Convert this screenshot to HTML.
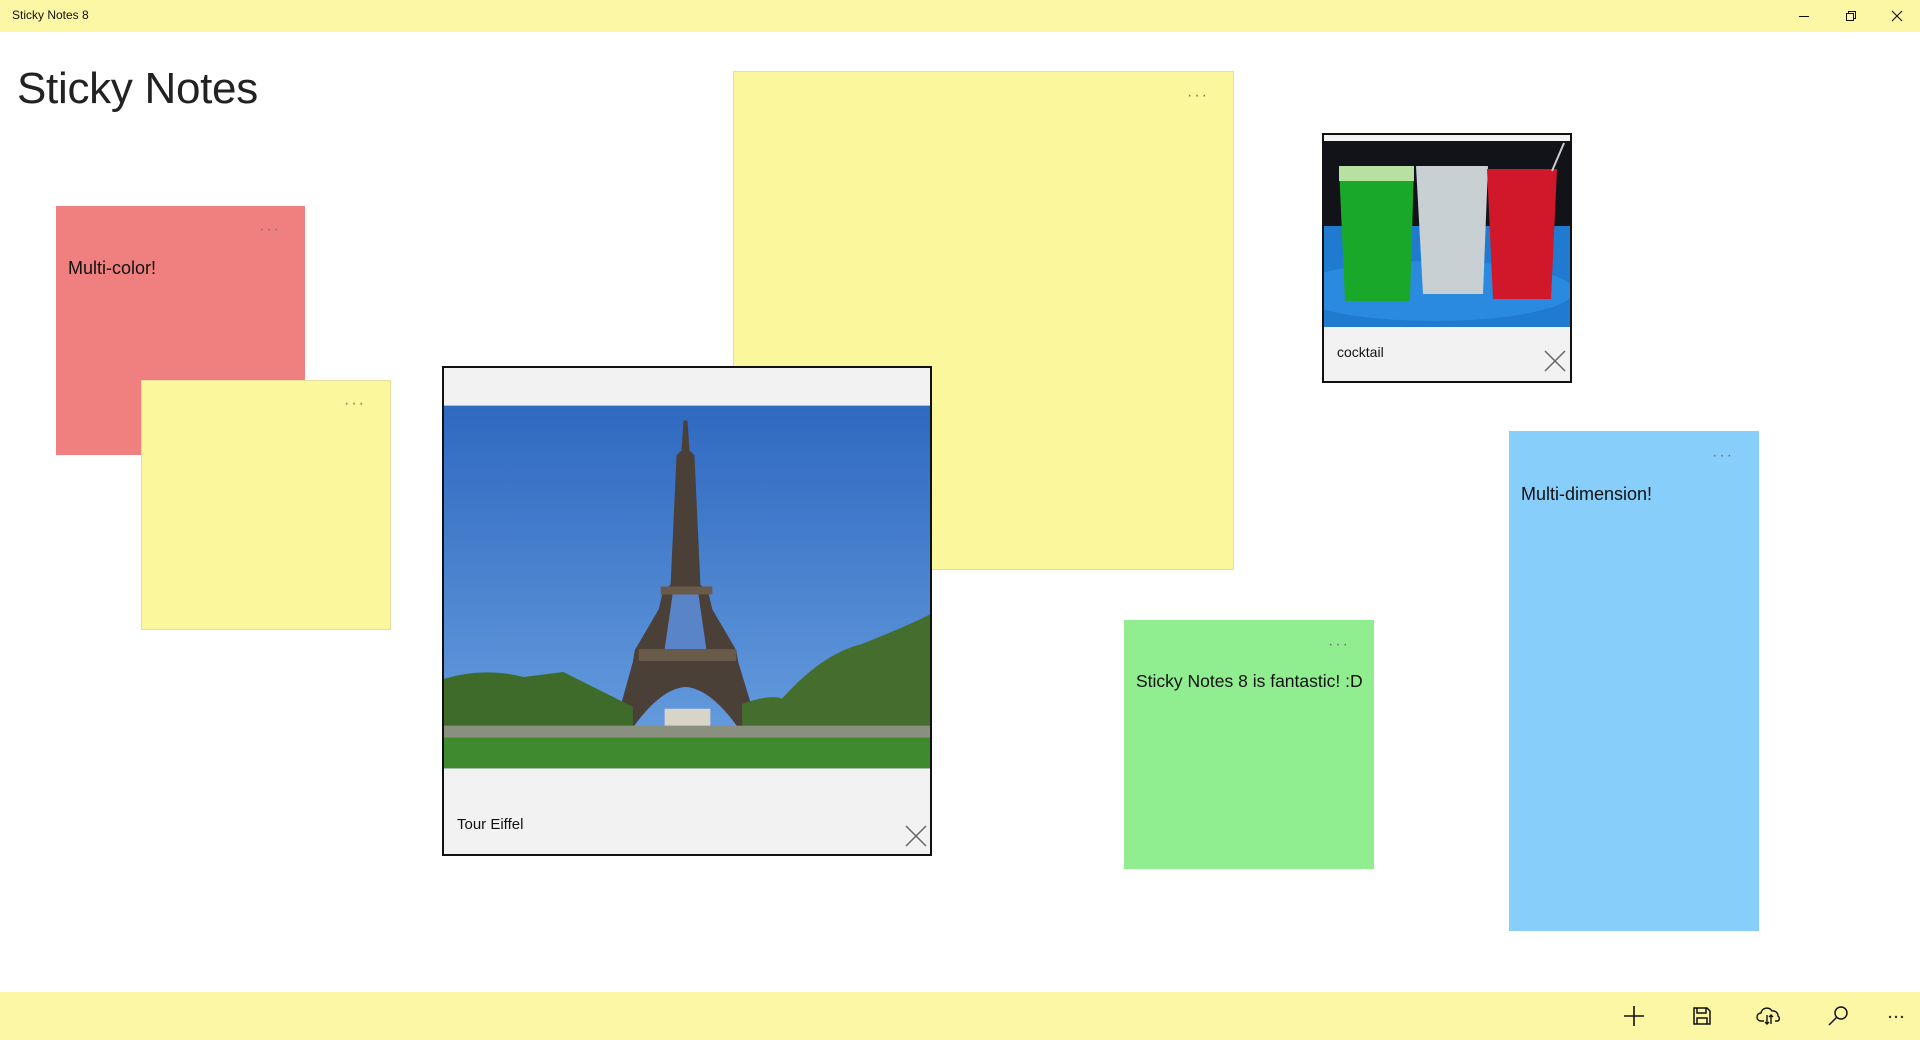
<!DOCTYPE html>
<html><head><meta charset="utf-8"><style>
*{margin:0;padding:0;box-sizing:border-box}
body{width:1920px;height:1040px;overflow:hidden;background:#fff;font-family:"Liberation Sans",sans-serif;position:relative;color:#111}
.abs{position:absolute}
.tb{left:0;top:0;width:1920px;height:32px;background:#fcf7a4}
.bb{left:0;top:992px;width:1920px;height:48px;background:#fcf7a4}
.note{position:absolute}
.dots{position:absolute;font-size:16px;color:#777;letter-spacing:2px;line-height:10px}
.nt{position:absolute;font-size:18px;color:#111}
.card{position:absolute;background:#f2f2f2;border:2px solid #111}
</style></head><body>
<div class="abs tb"></div>
<div class="abs" style="left:12px;top:8px;font-size:12px">Sticky Notes 8</div>
<svg class="abs" style="left:1795px;top:8px" width="120" height="16">
<line x1="4" y1="8.5" x2="14" y2="8.5" stroke="#111" stroke-width="1"/>
<rect x="51.5" y="5.5" width="7" height="7" fill="none" stroke="#111"/>
<path d="M53.5 5.5V3.5H60.5V10.5H58.5" fill="none" stroke="#111"/>
<path d="M97 3L107 13M107 3L97 13" stroke="#111" stroke-width="1.1"/>
</svg>
<div class="abs" style="left:17px;top:64px;font-size:44px;color:#222;letter-spacing:-0.3px">Sticky Notes</div>

<div class="note" style="left:56px;top:206px;width:249px;height:249px;background:#f08080"></div>
<div class="dots" style="left:259px;top:225px">···</div>
<div class="nt" style="left:68px;top:258px">Multi-color!</div>

<div class="note" style="left:141px;top:380px;width:250px;height:250px;background:#fbf79d;border:1px solid #e4dfa0"></div>
<div class="dots" style="left:344px;top:399px">···</div>

<div class="note" style="left:733px;top:71px;width:501px;height:499px;background:#fbf79d;border:1px solid #e4dfa0"></div>
<div class="dots" style="left:1187px;top:91px">···</div>

<div class="card" style="left:442px;top:366px;width:490px;height:490px">
<svg class="abs" style="left:0;top:36px" width="486" height="366" viewBox="0 0 489 365">
<defs><linearGradient id="sky" x1="0" y1="0" x2="0" y2="1"><stop offset="0" stop-color="#2f69c0"/><stop offset="1" stop-color="#6aa0e0"/></linearGradient></defs>
<rect width="489" height="365" fill="url(#sky)"/>
<path d="M241 15L245 15L247 45L252 50L258 180L266 188L270 205L294 246L296 258L318 330L300 330Q270 285 243 283Q216 285 186 330L170 330L190 258L192 246L216 205L220 188L228 180L234 50L239 45Z" fill="#4a4038"/>
<path d="M230 190h26l8 55h-42z" fill="#5a84c8"/>
<rect x="218" y="182" width="52" height="8" fill="#6a5a4a"/>
<rect x="196" y="245" width="98" height="12" fill="#6a5a4a"/>
<path d="M0 275q40-12 80-2l40 -5 40 20 30 15v60H0z" fill="#3e6a2a"/>
<path d="M300 300q30-10 40 -5q40-45 80-55q50-20 69-30v150H300z" fill="#456e2e"/>
<rect x="222" y="305" width="46" height="22" fill="#d8d4c8"/>
<rect x="0" y="322" width="489" height="14" fill="#8a9080"/>
<rect x="0" y="334" width="489" height="31" fill="#3f8a2e"/>
</svg>
<div class="abs" style="left:13px;top:448px;font-size:15px">Tour Eiffel</div>
<svg class="abs" style="left:461px;top:457px" width="22" height="22"><path d="M1 1L21 21M21 1L1 21" stroke="#666" stroke-width="1.5"/></svg>
</div>

<div class="card" style="left:1322px;top:133px;width:250px;height:250px">
<svg class="abs" style="left:0;top:6px" width="246" height="186" viewBox="0 0 246 186">
<rect width="246" height="186" fill="#111318"/>
<rect x="0" y="85" width="246" height="101" fill="#1f7ad0"/>
<ellipse cx="110" cy="150" rx="140" ry="30" fill="#2a8ae0"/>
<path d="M15 25h75l-4 135h-65z" fill="#1aa82a"/>
<path d="M15 25h75v15h-75z" fill="#b8e0a0"/>
<path d="M92 25h72l-5 128h-60z" fill="#c8d0d4"/>
<path d="M163 28h70l-6 130h-58z" fill="#d0182a"/>
<line x1="228" y1="30" x2="240" y2="2" stroke="#ccc" stroke-width="2"/>
</svg>
<div class="abs" style="left:13px;top:209px;font-size:14px">cocktail</div>
<svg class="abs" style="left:220px;top:215px" width="22" height="22"><path d="M1 1L21 21M21 1L1 21" stroke="#666" stroke-width="1.5"/></svg>
</div>

<div class="note" style="left:1124px;top:620px;width:250px;height:249px;background:#90ee90"></div>
<div class="dots" style="left:1328px;top:640px">···</div>
<div class="nt" style="left:1136px;top:671px;font-size:17.5px">Sticky Notes 8 is fantastic! :D</div>

<div class="note" style="left:1509px;top:431px;width:250px;height:500px;background:#87cefa"></div>
<div class="dots" style="left:1712px;top:451px">···</div>
<div class="nt" style="left:1521px;top:484px">Multi-dimension!</div>

<div class="abs bb"></div>
<svg class="abs" style="left:1600px;top:992px" width="320" height="48">
<path d="M34 14V34M24 24H44" stroke="#111" stroke-width="1.6"/>
<g fill="none" stroke="#111" stroke-width="1.5"><path d="M94 16h13l3 3v13h-16z"/><path d="M97 16v5h9v-5"/><path d="M97 32v-6h10v6"/></g>
<g fill="none" stroke="#111" stroke-width="1.4"><path d="M164 29h-3a4 4 0 0 1 0-8a6 6 0 0 1 11-2a5 5 0 0 1 6 5a3 3 0 0 1 0 5h-3"/><path d="M167 23v9M165 30l2 2 2-2M171 32v-9M169 25l2-2 2 2"/></g>
<g fill="none" stroke="#111" stroke-width="1.5"><circle cx="241" cy="21" r="6"/><path d="M237 25l-8 8"/></g>
<g fill="#333"><circle cx="290" cy="25" r="1.2"/><circle cx="296" cy="25" r="1.2"/><circle cx="302" cy="25" r="1.2"/></g>
</svg>
</body></html>
